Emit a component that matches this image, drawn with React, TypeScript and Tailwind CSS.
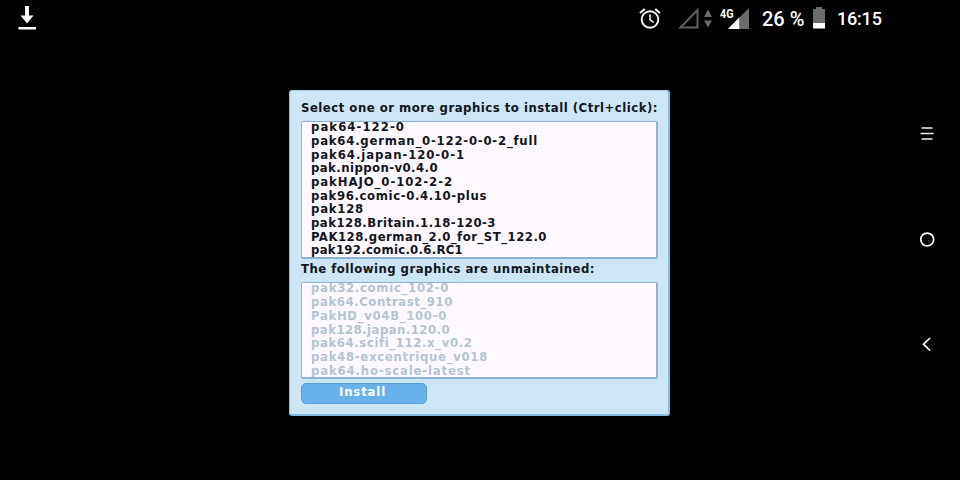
import { useLayoutEffect, useRef } from "react";

// Spreads a line's letters so that it takes up exactly the given width.
function Line({ text, width, className = "" }: { text: string; width: number; className?: string }) {
  const ref = useRef<HTMLSpanElement>(null);
  useLayoutEffect(() => {
    const el = ref.current;
    if (!el) return;
    el.style.letterSpacing = "0px";
    const natural = el.getBoundingClientRect().width;
    el.style.letterSpacing = `${(width - natural) / text.length}px`;
  }, [text, width]);
  return (
    <div className={`h-[13.7px] leading-[13.7px] whitespace-pre ${className}`}>
      <span ref={ref}>{text}</span>
    </div>
  );
}

const maintained: [string, number][] = [
  ["pak64-122-0", 94],
  ["pak64.german_0-122-0-0-2_full", 227],
  ["pak64.japan-120-0-1", 154],
  ["pak.nippon-v0.4.0", 127],
  ["pakHAJO_0-102-2-2", 142],
  ["pak96.comic-0.4.10-plus", 176],
  ["pak128", 53],
  ["pak128.Britain.1.18-120-3", 185],
  ["PAK128.german_2.0_for_ST_122.0", 236],
  ["pak192.comic.0.6.RC1", 152],
];

const unmaintained: [string, number][] = [
  ["pak32.comic_102-0", 138],
  ["pak64.Contrast_910", 142],
  ["PakHD_v04B_100-0", 136],
  ["pak128.japan.120.0", 139],
  ["pak64.scifi_112.x_v0.2", 161],
  ["pak48-excentrique_v018", 177],
  ["pak64.ho-scale-latest", 160],
];

function StatusBar() {
  return (
    <header className="flex h-[38px] items-center pl-[18px] pr-[77px] text-white">
      <svg width="20" height="26" viewBox="0 0 20 26" fill="#fff">
        <path d="M7 0h4v9.500h4.500L9 17.500 2.500 9.500H7z" />
        <path d="M.5 21h17.500v2.500H.5z" />
      </svg>
      <div className="ml-auto flex h-full items-center">
        <svg width="24" height="24" viewBox="0 0 24 24" fill="none" stroke="#f4f4f4" strokeWidth="2">
          <circle cx="12" cy="12.500" r="8.300" />
          <path d="M12 7.500v5.300l3.700 2.500" strokeWidth="1.600" />
          <path d="M2 6l4.800-4M22 6l-4.800-4" strokeWidth="2.200" />
        </svg>
        <svg className="ml-[16px]" width="36" height="24" viewBox="0 0 36 24">
          <path d="M2.500 20.500H19.500V3z" fill="none" stroke="#606060" strokeWidth="2" />
          <path d="M26 10l4-7.500 4 7.500zM26 13.500h8l-4 7z" fill="#6c6c6c" />
        </svg>
        <svg className="ml-[6px]" width="30" height="26" viewBox="0 0 30 26">
          <path d="M8 23L29 2v21z" fill="#6b6b6b" />
          <path d="M8 23l11.200-11.500V23z" fill="#fff" />
          <text x="0" y="11.500" fill="#fff" stroke="#000" strokeWidth="2" paintOrder="stroke" fontSize="12" fontWeight="700" textLength="13.500" lengthAdjust="spacingAndGlyphs" fontFamily="Roboto, sans-serif">4G</text>
        </svg>
        <span className="ml-[12px] w-[45px] whitespace-nowrap font-[Roboto,sans-serif] text-[20px] font-medium leading-none">26 %</span>
        <svg className="ml-[6px]" width="12" height="24" viewBox="0 0 12 24">
          <path d="M3 0h6v2h3v14H0V2h3z" fill="#6b6b6b" />
          <path d="M0 16h12v5.500H0z" fill="#fff" />
        </svg>
        <span className="ml-[12px] w-[46px] whitespace-nowrap font-[Roboto,sans-serif] text-[18px] font-medium leading-none tracking-[-0.2px]">16:15</span>
      </div>
    </header>
  );
}

export default function App() {
  return (
    <div className="flex h-[480px] w-[960px] flex-col overflow-hidden bg-black">
      <StatusBar />
      <div className="flex flex-1">
        <div className="ml-[289px] mt-[52px] flex h-[326px] w-[381px] flex-col rounded-[3px] border border-r-2 border-b-2 border-[#87bce2] border-t-[#a8cee4] bg-[#cce6f6] pl-[11px] pt-[10px] font-['DejaVu_Sans_Condensed','DejaVu_Sans',sans-serif] text-[13px] font-bold text-[#14151d]">
          <Line text="Select one or more graphics to install (Ctrl+click):" width={357} />
          <div className="mt-[6.3px] h-[138px] w-[357px] overflow-hidden rounded-[2px] border-[1.5px] border-r-2 border-b-2 border-[#8bb4d2] bg-[#fdf9ff] pl-[9px]">
            <div className="-mt-[1.7px]">
              {maintained.map(([name, width]) => <Line key={name} text={name} width={width} />)}
            </div>
          </div>
          <Line text="The following graphics are unmaintained:" width={294} className="mt-[3px]" />
          <div className="mt-[6.300px] h-[97px] w-[357px] shrink-0 overflow-hidden rounded-[2px] border-[1.5px] border-r-2 border-b-2 border-[#8bb4d2] bg-[#fdf9ff] pl-[9px] text-[#b3c5d2]">
            <div className="-mt-[1.500px]">
              {unmaintained.map(([name, width]) => <Line key={name} text={name} width={width} />)}
            </div>
          </div>
          <button className="mt-[4px] flex h-[21px] w-[126px] justify-center rounded-[5px] border border-[#5b9fd2] bg-[#68b1ea] pt-[1px] pr-[3px] text-white">
            <Line text="Install" width={47} />
          </button>
        </div>
        <nav className="ml-auto flex w-[66px] flex-col items-center text-white">
          <svg className="mt-[87px]" width="16" height="16" viewBox="0 0 16 16" stroke="#f2f2f2" strokeWidth="1.500">
            <path d="M2.500 3h11M1.500 8.500h13M2.500 14h11" />
          </svg>
          <svg className="mt-[90px]" width="17" height="17" viewBox="0 0 17 17" fill="none" stroke="#fff" strokeWidth="1.700">
            <circle cx="8.200" cy="8.500" r="6.400" />
          </svg>
          <svg className="mt-[88px]" width="16" height="16" viewBox="0 0 16 16" fill="none" stroke="#fff" strokeWidth="1.700">
            <path d="M11 2L4.500 8.200 11 14.500" />
          </svg>
        </nav>
      </div>
    </div>
  );
}
